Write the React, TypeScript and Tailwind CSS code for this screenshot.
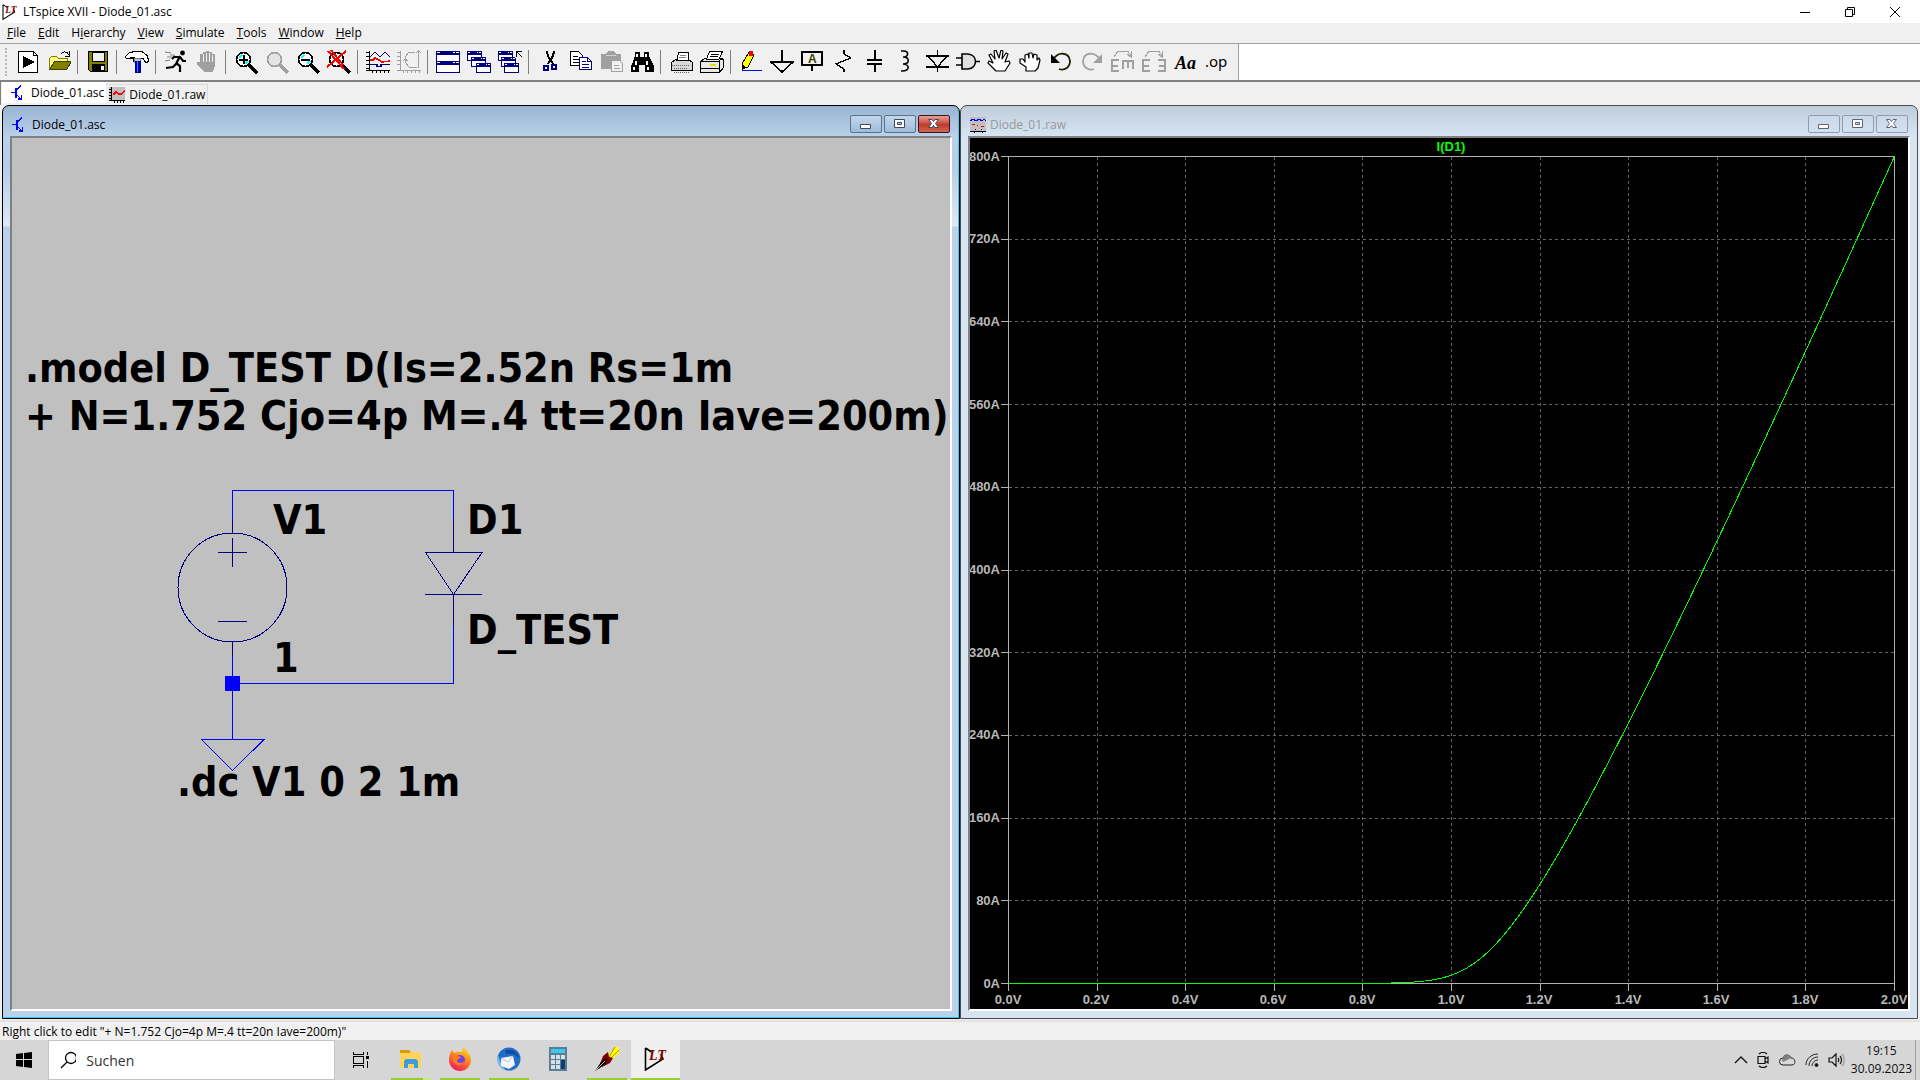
import React, { useState } from 'react';

type IconProps = { children: React.ReactNode; smooth?: boolean };

const Icon = ({ children, smooth }: IconProps) => (
  <svg width="24" height="24" viewBox="0 0 24 24" fill="none" shapeRendering={smooth ? 'auto' : 'crispEdges'} aria-hidden="true">
    {children}
  </svg>
);

const LtLogo = ({ size }: { size: number }) => (
  <svg width={size} height={size} viewBox="0 0 24 24" fill="none" aria-hidden="true">
    <path d="M1.500 1v22L19 12l-2-5M1.500 1l6 4" stroke="#000" strokeWidth="1.600" />
    <text x="5" y="13" fontFamily="Liberation Serif, serif" fontWeight="700" fontStyle="italic" fontSize="14" fill="#800000">
      LT
    </text>
  </svg>
);

const TransistorIcon = () => (
  <svg width="16" height="16" viewBox="0 0 16 16" fill="none" stroke="#0000ff" strokeWidth="1.200" shapeRendering="crispEdges" aria-hidden="true">
    <path d="M0 7.500h5M10 .5L5 6M5 9l5 5" />
    <path d="M5 3v9.500" strokeWidth="2" />
    <path d="M7 14h3.500v-4M9 13l1 2" />
  </svg>
);

const WaveIcon = () => (
  <svg width="16" height="16" viewBox="0 0 16 16" fill="none" shapeRendering="crispEdges" aria-hidden="true">
    <path d="M0 0h16v13H0z" fill="#c0c0c0" />
    <path d="M2.500 0v14M0 13.500h16M0 2.500h3M0 5.500h3M0 8.500h3M0 11.500h3M5.500 14v2M8.500 14v2M11.500 14v2M14.500 14v2" stroke="#000" />
    <path d="M4 8l3-3 3 2 2 0 4-3" stroke="#ff0000" strokeWidth="1.500" />
  </svg>
);

const WaveWindowIcon = () => (
  <svg width="16" height="16" viewBox="0 0 16 16" fill="none" shapeRendering="crispEdges" aria-hidden="true">
    <path d="M0 0h16v14H0z" fill="#c0c0c0" />
    <path d="M0 4l3-2 3 2 3-2 3 2 2-2 2 2" stroke="#0000ff" />
    <path d="M2 7.500h3M7 8.500h1M11 9.500h3" stroke="#ff0000" />
    <path d="M5 12.500h1M11 12.500h1" stroke="#000080" />
    <path d="M0 14.500h16M4.500 15v1M12.500 15v1" stroke="#000" strokeWidth="1.500" />
  </svg>
);

const Lens = ({ color = '#000', children }: { color?: string; children?: React.ReactNode }) => (
  <>
    <circle cx="9.500" cy="9.500" r="7" fill={color === '#000' ? '#fff' : '#e4e4e4'} stroke={color} strokeWidth="1.800" />
    {color === '#000' && <path d="M5 8l3-3M11 14l3-3" stroke="#00ffff" strokeWidth="2" />}
    <path d="M15 15l8 8" stroke={color} strokeWidth="3" />
    {children}
  </>
);

const MiniWindow = ({ x, y }: { x: number; y: number }) => (
  <>
    <path d={`M${x + 0.5} ${y + 0.5}h14v9h-14z`} fill="#fff" stroke="#000080" />
    <path d={`M${x} ${y}h15v4h-15z`} fill="#000080" />
    <path d={`M${x + 1} ${y + 1}h2v1h-2zM${x + 10} ${y + 1}h1v1h-1zM${x + 12} ${y + 1}h2v1h-2z`} fill="#fff" />
  </>
);

type Tool = { label: string; icon: React.ReactNode; smooth?: boolean };

const toolGroups: Tool[][] = [
  [
    {
      label: 'New Schematic',
      icon: (
        <>
          <path d="M2.500 1.500h15l4 4v17h-19z" fill="#fff" stroke="#000" />
          <path d="M17.500 1.500v4h4" stroke="#000" />
          <path d="M7 6v12l12-6z" fill="#000" />
        </>
      ),
    },
    {
      label: 'Open',
      icon: (
        <>
          <path d="M2.500 19V8.500l2-2h5l2 2h9V12" fill="#ffff80" stroke="#808000" />
          <path d="M2.500 19.500l5-8h17l-5 8z" fill="#808000" stroke="#404000" />
          <path d="M14 4c2-3 6-3 8 1M22.500 1v5h-5" stroke="#000" />
        </>
      ),
    },
  ],
  [
    {
      label: 'Save',
      icon: (
        <>
          <path d="M2.500 1.500h19v20h-17l-2-2z" fill="#808000" stroke="#000" />
          <path d="M6 2h12v9H6z" fill="#f0f0f0" stroke="#000" />
          <path d="M6 14h13v8H6z" fill="#000" />
          <path d="M15 16h3v4h-3z" fill="#f0f0f0" />
        </>
      ),
    },
  ],
  [
    {
      label: 'Control Panel',
      icon: (
        <>
          <path d="M0 7l4-4 6-1.500h7l5 4 2 6-3 1-3-4h-4v3H9V8H5L2 9z" fill="#fff" stroke="#000" strokeWidth="1.200" />
          <path d="M9 8h6v4H9z" fill="#c0c0c0" stroke="#808080" />
          <path d="M10 11h5v11h-5z" fill="#0000c0" stroke="#000080" />
          <path d="M12 11v11" stroke="#4080ff" />
        </>
      ),
    },
  ],
  [
    {
      label: 'Run',
      smooth: true,
      icon: (
        <>
          <circle cx="18.500" cy="3" r="2.400" fill="#000" />
          <path d="M16 6l-4 8M11 7l5 0 3 4h3M11 6l-3 3M12 13l4 3 0 6M12 14l-3 3-7 1" stroke="#000" strokeWidth="2.200" />
          <path d="M1 2l6 1M3 7l5 0M1 11l5-1M6 5l4 0" stroke="#808080" strokeWidth="1" />
        </>
      ),
    },
    {
      label: 'Halt',
      icon: (
        <>
          <path d="M5 12V4h3V2h3V1h3v1h3v2h3v12l-2 6H9l-7-8v-2h3l3 3z" fill="#a0a0a0" />
          <path d="M8.500 4v8M11.500 3v9M14.500 3v9M17.500 5v7" stroke="#f0f0f0" />
        </>
      ),
    },
  ],
  [
    { label: 'Zoom area', icon: <Lens><path d="M5 9.500h9M9.500 5v9" stroke="#000" strokeWidth="2" /></Lens> },
    { label: 'Pan', icon: <Lens color="#a0a0a0" /> },
    { label: 'Zoom back', icon: <Lens><path d="M5 9.500h9" stroke="#000" strokeWidth="2" /></Lens> },
    {
      label: 'Zoom full extents',
      icon: <Lens><path d="M1 1l16 18M19 1L0 17M4 0l12 15" stroke="#ff0000" strokeWidth="2" /></Lens>,
    },
  ],
  [
    {
      label: 'Autorange',
      icon: (
        <>
          <path d="M3 1v20M0 20.500h24M0 2.500h3M0 6.500h3M0 10.500h3M0 14.500h3M0 18.500h3M6.500 20v3M10.500 20v3M14.500 20v3M18.500 20v3M22.500 20v3" stroke="#000" />
          <path d="M4 7l5-5 5 5 5-5 5 5M4 14.500h7v2h4v-2h9" stroke="#000080" strokeWidth="1.300" />
          <path d="M4 10h3l2-2 4 2 3 2 8-1" stroke="#ff0000" strokeWidth="1.600" />
        </>
      ),
    },
    {
      label: 'Polar plot',
      icon: (
        <path
          d="M3.500 1v20M0 20.500h24M0 2.500h3M0 6.500h3M0 10.500h3M0 14.500h3M6.500 20v3M10.500 20v3M14.500 20v3M18.500 20v3M22.500 20v3M21.500 1v17M19 3l2.500-2L24 3M18 2h-6L8 7v5l4 5 8 1M8 9l-2 2M8 9l3 2"
          stroke="#a0a0a0"
        />
      ),
    },
  ],
  [
    {
      label: 'Tile windows',
      icon: (
        <>
          <path d="M.5 1.500h23v21H.5z" fill="#fff" stroke="#000080" />
          <path d="M0 1h24v4H0zM0 11h24v4H0z" fill="#000080" />
          <path d="M1 2h3v1H1zM17 2h2v1h-2zM20 2h3v1h-3zM1 12h3v1H1zM17 12h2v1h-2zM20 12h3v1h-3z" fill="#fff" />
        </>
      ),
    },
    {
      label: 'Cascade windows',
      icon: (
        <>
          <MiniWindow x={0} y={1} />
          <MiniWindow x={4} y={7} />
          <MiniWindow x={9} y={13} />
        </>
      ),
    },
    {
      label: 'Close windows',
      icon: (
        <>
          <MiniWindow x={0} y={1} />
          <MiniWindow x={3} y={7} />
          <MiniWindow x={6} y={13} />
          <path d="M17 0h8v8h-8z" fill="#f0f0f0" />
          <path d="M18.500 7V1.500H24M19 2l5 5" stroke="#000" strokeWidth="1.300" />
        </>
      ),
    },
  ],
  [
    {
      label: 'Cut',
      icon: (
        <>
          <path d="M10 1l1 5 5 8M17 1l-1 5-5 8" stroke="#000" strokeWidth="2" />
          <circle cx="9" cy="18" r="2.500" stroke="#000080" strokeWidth="1.800" />
          <circle cx="17" cy="17" r="2.500" stroke="#000080" strokeWidth="1.800" />
        </>
      ),
    },
    {
      label: 'Copy',
      icon: (
        <>
          <path d="M2.500 1.500h8l4 4v10h-12z" fill="#fff" stroke="#000" />
          <path d="M5 6.500h5M5 9.500h7M5 12.500h7" stroke="#000" />
          <path d="M11.500 7.500h8l4 4v8h-12z" fill="#fff" stroke="#000080" strokeWidth="1.200" />
          <path d="M14 11.500h4M14 14.500h7M14 17.500h7M19.500 7v4.500h4" stroke="#000080" />
        </>
      ),
    },
    {
      label: 'Paste',
      icon: (
        <>
          <path d="M2 4h5l2-3h6l2 3h5v15H2z" fill="#a0a0a0" />
          <path d="M7 5.500h10" stroke="#d0d0d0" />
          <path d="M12.500 10.500h8l3 3v8h-11z" fill="#f0f0f0" stroke="#a0a0a0" />
          <path d="M15 15.500h5M15 18.500h6" stroke="#a0a0a0" />
        </>
      ),
    },
    {
      label: 'Find',
      icon: (
        <>
          <path d="M5 2h5v5h4V2h5v4l3 6 2 4v6h-9v-7H9v7H1v-6l2-4 2-6z" fill="#000" />
          <path d="M6 4h2v3H6zM15 4h2v3h-2zM5 11h2v4H5zM16 11h2v4h-2zM3 17h2v3H3zM17 17h2v3h-2z" fill="#fff" />
        </>
      ),
    },
  ],
  [
    {
      label: 'Print Setup',
      icon: (
        <>
          <path d="M2.500 12.500l4-3h13l4 3v8h-21z" fill="#d8d8d8" stroke="#000" />
          <path d="M8 10L9.500 2.500h10V10z" fill="#fff" stroke="#000" />
          <path d="M11 5h6M10 7.500h7" stroke="#808080" />
          <path d="M3 15.500h18M5 18.500h14M5 22h15" stroke="#606060" strokeDasharray="1 1" />
        </>
      ),
    },
    {
      label: 'Print',
      icon: (
        <>
          <path d="M.5 11.500l4-3h14l5 1v8l-4 5H.5z" fill="#e8e8e8" stroke="#000" />
          <path d="M6.500 9l3-7.500h13L19 9z" fill="#fff" stroke="#000" />
          <path d="M11 4h8M10 6.500h8M0 11.500h19.500v11M19 11l4-3M0 18.500h19" stroke="#000" />
          <path d="M10 15h6" stroke="#e0e000" strokeWidth="2" />
        </>
      ),
    },
  ],
  [
    {
      label: 'Wire',
      icon: (
        <>
          <path d="M3 14l7-12 5 3-6 12-6 2z" fill="#ffff00" stroke="#000" />
          <path d="M10 1h4v5h-4z" fill="#ff0000" />
          <path d="M3 14l4 3-4 3z" fill="#000" />
          <path d="M3 20.500h20" stroke="#0000ff" />
        </>
      ),
    },
    { label: 'Ground', icon: <path d="M12 0v12M1 12h22L12 22z" stroke="#000" strokeWidth="1.600" /> },
    {
      label: 'Label Net',
      icon: (
        <>
          <path d="M1 2h20v13H1z" fill="#f0f0f0" stroke="#000" strokeWidth="1.800" />
          <path d="M11 15v6" stroke="#000" strokeWidth="1.500" />
          <text x="7" y="13" fontFamily="Liberation Sans, sans-serif" fontWeight="700" fontSize="12" fill="#404000">A</text>
        </>
      ),
    },
    { label: 'Resistor', icon: <path d="M12 0v4l7 4-15 6 8 5v3" stroke="#000" strokeWidth="1.300" /> },
    { label: 'Capacitor', icon: <path d="M11.500 0v9M11.500 14v8M4 9.500h15M4 14h15" stroke="#000" strokeWidth="2" /> },
    { label: 'Inductor', smooth: true, icon: <path d="M7 1h3c5 0 5 6-1 6c7 0 7 7 0 7c7 0 7 7-1 7H7" stroke="#000" strokeWidth="1.600" /> },
    { label: 'Diode', icon: <path d="M12.500 0v6M1 6h23M3 6l9.500 11L22 6M1 17h23M12.500 17v5" stroke="#000" strokeWidth="1.400" /> },
    {
      label: 'Component',
      smooth: true,
      icon: <path d="M6 4h6c10 1 10 14 0 15H6zM0 8h6M0 15h6M19 11.500h5" fill="#e0e0e0" stroke="#000" strokeWidth="1.600" />,
    },
    {
      label: 'Move',
      smooth: true,
      icon: (
        <path
          d="M9 21L1 13l1-2 4 2-4-8 2-1 4 5-1-8 2-1 3 8 2-8 2 1-1 8 4-6 2 1-3 8 4-1 1 2-5 8z"
          fill="#fff" stroke="#000" strokeWidth="1.200" strokeLinejoin="round"
        />
      ),
    },
    {
      label: 'Drag',
      smooth: true,
      icon: (
        <path
          d="M8 21v-4l-6-4V9l3 0 2 3V5l3-1 1 4V3h3l1 5 1-4 3 1v5l2-2 1 2-2 8-3 3z"
          fill="#fff" stroke="#000" strokeWidth="1.200" strokeLinejoin="round"
        />
      ),
    },
    {
      label: 'Undo',
      smooth: true,
      icon: (
        <>
          <path d="M4 10C9 1 20 2 21 11c0 6-5 10-11 8" stroke="#202000" strokeWidth="1.800" />
          <path d="M2 4v9h9z" fill="#000" />
        </>
      ),
    },
    {
      label: 'Redo',
      smooth: true,
      icon: (
        <>
          <path d="M20 10C15 1 4 2 3 11c0 6 5 10 11 8" stroke="#a0a0a0" strokeWidth="1.800" />
          <path d="M22 4v9h-9z" fill="#a0a0a0" />
        </>
      ),
    },
    {
      label: 'Rotate',
      icon: (
        <>
          <path d="M3 7l4-6h10l3 5M16 4l4 3V1" stroke="#a0a0a0" />
          <path d="M8 10H1v11h7M1 15.500h6M11 11h12M12 11v8M17 11v7M22 11v8" stroke="#a0a0a0" strokeWidth="2" />
        </>
      ),
    },
    {
      label: 'Mirror',
      icon: (
        <>
          <path d="M3 7l4-6h10l3 5M16 4l4 3V1" stroke="#a0a0a0" />
          <path d="M8 10H1v11h7M1 15.500h6M16 10h7v11h-7M23 15.500h-6" stroke="#a0a0a0" strokeWidth="2" />
        </>
      ),
    },
    {
      label: 'Text',
      smooth: true,
      icon: <text x="2" y="19" fontFamily="Liberation Serif, serif" fontWeight="700" fontStyle="italic" fontSize="18" fill="#000">Aa</text>,
    },
    {
      label: 'SPICE Directive',
      smooth: true,
      icon: <text x="1" y="17" fontFamily="Noto Sans, sans-serif" fontSize="15" fill="#000">.op</text>,
    },
  ],
];

const menus = ['File', 'Edit', 'Hierarchy', 'View', 'Simulate', 'Tools', 'Window', 'Help'];
// index of the underlined access key, where it is not the first letter
const accessKey: Record<string, number> = { Hierarchy: 1 };

const TitleBar = () => (
  <header className="flex h-[23px] items-center bg-white pl-[2px] pr-[3px]">
    <LtLogo size={16} />
    <h1 className="ml-[5px] flex-1 text-[12px]">LTspice XVII - Diode_01.asc</h1>
    <button aria-label="Minimize" className="flex h-5 w-[45px] items-center justify-center">
      <svg width="10" height="10" stroke="#000" fill="none"><path d="M0 5.500h10" /></svg>
    </button>
    <button aria-label="Restore" className="flex h-5 w-[45px] items-center justify-center">
      <svg width="10" height="10" stroke="#000" fill="none"><path d="M.5 2.500h7v7h-7zM2.500 2V.5h7v7H8" /></svg>
    </button>
    <button aria-label="Close" className="flex h-5 w-[45px] items-center justify-center">
      <svg width="10" height="10" stroke="#000" fill="none"><path d="M0 0l10 10M10 0L0 10" /></svg>
    </button>
  </header>
);

const MenuBar = () => (
  <nav className="flex h-[21px] items-center border-b border-[#a0a0a0] pl-px text-[12px]">
    {menus.map((name) => {
      const i = accessKey[name] ?? 0;
      return (
        <button key={name} className="px-[6px] leading-5">
          {name.slice(0, i)}
          <span className="underline">{name[i]}</span>
          {name.slice(i + 1)}
        </button>
      );
    })}
  </nav>
);

const Toolbar = () => (
  <div className="flex h-[38px] border-b-2 border-[#808080] bg-white">
    <div className="flex items-center border-r border-[#a0a0a0] bg-[#f0f0f0] pr-[6px]">
      <div className="ml-[5px] mr-[6px] h-7 w-0 border-l-2 border-dotted border-[#b8b8b8]" />
      {toolGroups.map((group, g) => (
        <React.Fragment key={g}>
          {g > 0 && (
            <div className="h-6 w-2 pl-[2px]">
              <div className="h-full w-px bg-[#808080]" />
            </div>
          )}
          {group.map((tool) => (
            <button key={tool.label} title={tool.label} aria-label={tool.label} className="w-[31px] pl-[3px]">
              <Icon smooth={tool.smooth}>{tool.icon}</Icon>
            </button>
          ))}
        </React.Fragment>
      ))}
    </div>
  </div>
);

type TabBarProps = { active: string; onSelect: (name: string) => void };

const TabBar = ({ active, onSelect }: TabBarProps) => {
  const tabs = [
    { name: 'Diode_01.asc', icon: <TransistorIcon /> },
    { name: 'Diode_01.raw', icon: <WaveIcon /> },
  ];
  return (
    <div role="tablist" className="flex h-[23px] items-start border-l border-[#808080] pl-px text-[12px]">
      {tabs.map((tab) => (
        <button
          key={tab.name}
          role="tab"
          aria-selected={tab.name === active}
          onClick={() => onSelect(tab.name)}
          className={
            tab.name === active
              ? 'flex h-[21px] items-center gap-1 bg-white pl-[9px] pr-[2px] leading-5'
              : 'mt-[2px] flex h-5 items-center gap-1 border-r border-t border-[#d9d9d9] pl-[3px] pr-[2px] leading-5'
          }
        >
          {tab.icon}
          {tab.name}
        </button>
      ))}
    </div>
  );
};

type ChildWindowProps = { title: string; icon: React.ReactNode; active: boolean; children: React.ReactNode };

const ChildWindow = ({ title, icon, active, children }: ChildWindowProps) => {
  const control = active
    ? 'border-[#5a7391] bg-linear-to-b from-[#c3d6ea] via-[#b4cbe4] via-45% to-[#9fbad8]'
    : 'border-[#8d9db5] bg-linear-to-b from-[#cbd9e8] to-[#d3e0ee]';
  const mark = active ? '#3f4a5a' : '#5c6577';
  return (
    <section
      aria-label={title}
      className={`flex min-w-0 flex-1 flex-col rounded-t-[7px] border px-[7px] pb-[7px] ${
        active
          ? 'border-black bg-[linear-gradient(#99b4d1,#b9d1ea_30px,#b5cde8_60px,#dce9f8_120px,#b9d1ea_121px)] shadow-[inset_-1px_-1px_#2fd0f0]'
          : 'border-[#4a4a50] bg-[linear-gradient(#bfcddb,#d7e4f2_30px)]'
      }`}
    >
      <div className="flex h-[30px] items-end px-[2px] pb-[3px]">
        {icon}
        <h2 className={`ml-1 flex-1 text-[12px] leading-4 ${active ? 'text-black' : 'text-[#989898]'}`}>{title}</h2>
        <div className="flex gap-[2px]">
          <button aria-label="Minimize" className={`flex h-[18px] w-8 items-center justify-center rounded-[2px] border ${control}`}>
            <svg width="12" height="12"><path d="M.5 6.500h10v4H.5z" fill="#fff" stroke={mark} /></svg>
          </button>
          <button aria-label="Maximize" className={`flex h-[18px] w-8 items-center justify-center rounded-[2px] border ${control}`}>
            <svg width="12" height="12"><path d="M.5 1.500h10v8H.5zM3.500 4.500v2h4v-2z" fill="#fff" fillRule="evenodd" stroke={mark} /></svg>
          </button>
          <button
            aria-label="Close"
            className={`flex h-[18px] w-8 items-center justify-center rounded-[2px] border ${
              active ? 'border-[#43101a] bg-linear-to-b from-[#e5a095] via-[#c0392b] via-55% to-[#cf6a52]' : control
            }`}
          >
            <svg width="12" height="12">
              <path d="M.5 1.500h3.500l1.500 2 1.500-2h3.500L7.500 5.500l3 4H7l-1.500-2-1.500 2H.5l3-4z" fill="#fff" stroke={mark} />
            </svg>
          </button>
        </div>
      </div>
      <div className="flex min-h-0 flex-1 border-2 border-b-white border-l-[#808080] border-r-white border-t-[#808080]">{children}</div>
    </section>
  );
};

const notes = [
  { x: 13, y: 244, text: '.model D_TEST D(Is=2.52n Rs=1m' },
  { x: 13, y: 292, text: '+ N=1.752 Cjo=4p M=.4 tt=20n Iave=200m)' },
  { x: 261, y: 396, text: 'V1' },
  { x: 455, y: 396, text: 'D1' },
  { x: 455, y: 506, text: 'D_TEST' },
  { x: 261, y: 534, text: '1' },
  { x: 165, y: 658, text: '.dc V1 0 2 1m' },
];

const Schematic = () => (
  <svg viewBox="0 0 938 871" className="w-full bg-[#c0c0c0]" fill="none">
    <g stroke="#0000ff" shapeRendering="crispEdges">
      <path d="M220.500 382V352.500h221V382M441.500 488v57.500h-221M220.500 518v83.500M189 601.500h63L220.500 632.500L189.500 601.500" />
      <path d="M213 538h15v15h-15z" fill="#0000ff" stroke="none" />
    </g>
    <g stroke="#000080" shapeRendering="crispEdges">
      <circle cx="220.500" cy="449.500" r="54.500" />
      <path d="M220.500 382v13M220.500 504v14M206 414.500h29M220.500 400v29M206 483.500h29" />
      <path d="M441.500 382v32M413 414.500h57L441.500 456.500L413.500 414.500M413 456.500h57M441.500 456v32" />
    </g>
    <g fill="#000" fontFamily="DejaVu Sans Condensed, Noto Sans, sans-serif" fontWeight="700" fontSize="41">
      {notes.map((n) => (
        <text key={n.text} x={n.x} y={n.y}>{n.text}</text>
      ))}
    </g>
  </svg>
);

const plot = { left: 38.5, right: 924.5, top: 18.5, bottom: 845.5 };
const xAt = (v: number) => plot.left + (v / 2) * (plot.right - plot.left);
const yAt = (a: number) => plot.bottom - (a / 800) * (plot.bottom - plot.top);
const snap = (n: number) => Math.floor(n) + 0.5;

// V = N*Vt*ln(I/Is + 1) + I*Rs, swept over the current
const diodeCurve = () => {
  const points = [`${xAt(0)},${yAt(0)}`];
  for (let e = -3; e < 1; e += 0.1) {
    const i = 10 ** e;
    points.push(`${xAt(0.0453 * Math.log(i / 2.52e-9 + 1) + i * 0.001)},${yAt(i)}`);
  }
  for (let i = 10; i <= 800; i += 5) {
    points.push(`${xAt(0.0453 * Math.log(i / 2.52e-9 + 1) + i * 0.001)},${yAt(i)}`);
  }
  return points.join(' ');
};

const WaveformPlot = () => {
  const steps = Array.from({ length: 11 }, (_, k) => k);
  return (
    <svg viewBox="0 0 938 871" className="w-full bg-black" fill="none">
      <g stroke="#646464" strokeDasharray="3 3" shapeRendering="crispEdges">
        {steps.slice(1, 10).map((k) => (
          <React.Fragment key={k}>
            <line x1={plot.left} x2={plot.right} y1={snap(yAt(k * 80))} y2={snap(yAt(k * 80))} />
            <line x1={snap(xAt(k * 0.2))} x2={snap(xAt(k * 0.2))} y1={plot.top} y2={plot.bottom} />
          </React.Fragment>
        ))}
      </g>
      <g stroke="#b0b0b0" shapeRendering="crispEdges">
        <path d="M38.500 18.500h886v827h-886z" />
        {steps.map((k) => (
          <path key={k} d={`M31 ${snap(yAt(k * 80))}h8M${snap(xAt(k * 0.2))} 845v8`} />
        ))}
      </g>
      <polyline points={diodeCurve()} stroke="#00ff00" shapeRendering="crispEdges" />
      <g fill="#b8b8b8" fontFamily="Liberation Sans, sans-serif" fontWeight="700" fontSize="13">
        {steps.map((k) => (
          <React.Fragment key={k}>
            <text x="30" y={Math.round(yAt(k * 80)) + 4} textAnchor="end">{k * 80}A</text>
            <text x={Math.round(xAt(k * 0.2)) - 1} y="866" textAnchor="middle">{(k * 0.2).toFixed(1)}V</text>
          </React.Fragment>
        ))}
        <text x="481" y="13" textAnchor="middle" fill="#00ff00">I(D1)</text>
      </g>
    </svg>
  );
};

const apps = [
  {
    name: 'Explorer',
    line: 'bg-[linear-gradient(90deg,#9acd32_80%,#c5e68a_80%)]',
    icon: (
      <>
        <path d="M1 3h9l2 2h10v16H1z" fill="#ffd35c" />
        <path d="M1 3h9l2 2-2 1H1z" fill="#d99a00" />
        <path d="M5 21v-7l2-2h10l2 2v7h-4v-4h-6v4z" fill="#3f9bdc" />
      </>
    ),
  },
  {
    name: 'Firefox',
    line: 'bg-[#9acd32]',
    icon: (
      <>
        <defs>
          <linearGradient id="fox" x1="0.8" y1="0" x2="0.3" y2="1">
            <stop offset="0" stopColor="#ffe226" />
            <stop offset=".45" stopColor="#ff8a1c" />
            <stop offset="1" stopColor="#f0145f" />
          </linearGradient>
        </defs>
        <path d="M16 0c1 3 7 6 7 13a11 11 0 0 1-22 0c0-4 1-7 3-10l2 3c3-2 6-1 8-1 0-2 1-4 2-5z" fill="url(#fox)" />
        <circle cx="12" cy="13" r="5" fill="#7542e5" />
        <path d="M5 9c3-1 5 0 8 1-1 2-4 2-4 4 1 3 6 2 8 0-1 5-11 6-12-1z" fill="#ff7a1a" />
      </>
    ),
  },
  {
    name: 'Thunderbird',
    line: 'bg-[#9acd32]',
    icon: (
      <>
        <circle cx="12" cy="12" r="11.500" fill="#1f6ec9" />
        <path d="M1 9c2 2 2 9 8 14C2 21-1 15 1 9z" fill="#7ab8f0" />
        <path d="M4 11l12-2 2 9-6 4-8-3z" fill="#f4f6fa" />
        <path d="M4 11l7 4 5-6" stroke="#b8c4d8" />
        <path d="M8 4c5-3 13 0 14 7-3-4-8-5-13-4z" fill="#164a9c" />
      </>
    ),
  },
  {
    name: 'Calculator',
    line: '',
    icon: (
      <>
        <path d="M3 0h18v24H3z" fill="#5f7d92" />
        <path d="M5 2h14v4H5z" fill="#3ccaf2" />
        <path d="M5 8h4v4H5zM10 8h4v4h-4zM15 8h4v4h-4zM5 13h4v4H5zM10 13h4v4h-4zM5 18h4v4H5zM10 18h4v4h-4z" fill="#d6e0e8" />
        <path d="M15 13h4v9h-4z" fill="#0b3e75" />
      </>
    ),
  },
  {
    name: 'Quill',
    line: 'bg-[#9acd32]',
    icon: (
      <>
        <path d="M12 10l8-10h4v6l-9 8z" fill="#ffff00" />
        <path d="M20 0l-6 10M24 3l-8 8" stroke="#b09000" />
        <path d="M5 17L8 9l5-4 1 5 4 1-3 5-8 4z" fill="#800000" />
        <path d="M0 24l6-9 6-5-1 6-6 5z" fill="#000" />
        <path d="M1 23l9-9" stroke="#c0c0c0" />
      </>
    ),
  },
];

const Taskbar = () => (
  <footer className="flex h-10 items-stretch bg-[#d6d6d6] text-[#111]">
    <button aria-label="Start" className="flex w-12 items-center justify-center">
      <svg width="16" height="16"><path d="M0 2l7-1v6H0zM8 1l8-1v7H8zM0 8h7v7l-7-1zM8 8h8v8l-8-1z" fill="#000" /></svg>
    </button>
    <label className="flex w-[287px] items-center border border-[#c4c4c4] bg-white pl-[11px]">
      <svg width="18" height="18" fill="none" stroke="#000" strokeWidth="1.300" aria-hidden="true">
        <circle cx="11" cy="7" r="5.500" />
        <path d="M7 11l-6 6" />
      </svg>
      <input
        type="text"
        aria-label="Suchen"
        placeholder="Suchen"
        className="ml-[10px] w-full bg-transparent text-[14px] outline-none placeholder:text-[#333]"
      />
    </label>
    <button aria-label="Task view" className="flex w-[51px] items-center justify-center">
      <svg width="16" height="16" fill="none" stroke="#000" shapeRendering="crispEdges">
        <path d="M.5 0v2.500h10V0M.5 4.500h10v7H.5zM.5 16v-2.500h10V16M14.500 0v3M14.500 9v7" />
        <path d="M13 4h3v3h-3z" fill="#000" stroke="none" />
      </svg>
    </button>
    {apps.map((app) => (
      <button key={app.name} aria-label={app.name} className="flex w-[49px] flex-col items-center px-1">
        <span className="flex flex-1 items-center">
          <Icon smooth>{app.icon}</Icon>
        </span>
        <span className={`h-[2px] w-10 ${app.line}`} />
      </button>
    ))}
    <button aria-label="LTspice" className="flex w-[49px] flex-col items-center bg-[#efefef]">
      <span className="flex flex-1 items-center">
        <LtLogo size={24} />
      </span>
      <span className="h-[2px] w-full bg-[#9acd32]" />
    </button>
    <div className="ml-auto flex items-center pr-1">
      <div className="mr-[6px] flex items-center gap-[9px]">
        <svg width="14" height="16" fill="none" stroke="#111" strokeWidth="1.400"><path d="M1 11l6-6 6 6" /></svg>
        <svg width="13" height="16" fill="none" stroke="#111" strokeWidth="1.200">
          <path d="M1 4.500h7v7H1zM8 7l3-2v6L8 9M2 2c2-2 6-2 8 0M2 14c2 2 6 2 8 0" />
        </svg>
        <svg width="17" height="16" stroke="#222">
          <path d="M4 13a3.500 3.500 0 0 1 0-7c1-4 7-4 8 0 5 0 5 7 1 7z" fill="#d8d8d8" />
          <path d="M3 8c1-6 8-6 9-2L4 10z" fill="#808080" stroke="none" />
        </svg>
        <svg width="14" height="16" fill="none" stroke="#222">
          <path d="M1 13C1 7 6 2 13 2M4 14c0-5 4-9 9-9M7 14c0-3 3-6 6-6" />
          <circle cx="11.500" cy="13" r="1.500" fill="#111" />
        </svg>
        <svg width="17" height="16" fill="none" stroke="#111" strokeWidth="1.200">
          <path d="M1 6h3l4-4v12l-4-4H1zM10 6c1 1 1 3 0 4M12 4c2 2 2 6 0 8" />
          <path d="M14 2c3 3 3 9 0 12" stroke="#999" />
        </svg>
      </div>
      <div className="flex flex-col items-center text-[12px] leading-[18px]">
        <span>19:15</span>
        <span>30.09.2023</span>
      </div>
      <div className="ml-[3px] h-10 w-px bg-[#a0a0a0]" />
    </div>
  </footer>
);

const App = () => {
  const [active, setActive] = useState('Diode_01.asc');

  return (
    <div className="flex min-h-screen flex-col bg-[#f0f0f0] font-['Open_Sans',sans-serif] text-black">
      <TitleBar />
      <MenuBar />
      <Toolbar />
      <TabBar active={active} onSelect={setActive} />
      <main className="flex flex-1 border-b-2 border-[#e2e2e2] px-[2px] pb-px">
        <ChildWindow title="Diode_01.asc" icon={<TransistorIcon />} active={active === 'Diode_01.asc'}>
          <Schematic />
        </ChildWindow>
        <ChildWindow title="Diode_01.raw" icon={<WaveWindowIcon />} active={active === 'Diode_01.raw'}>
          <WaveformPlot />
        </ChildWindow>
      </main>
      <div className="h-[18px] px-[2px] text-[12px] leading-5">
        Right click to edit "+ N=1.752 Cjo=4p M=.4 tt=20n Iave=200m)"
      </div>
      <Taskbar />
    </div>
  );
};

export default App;
